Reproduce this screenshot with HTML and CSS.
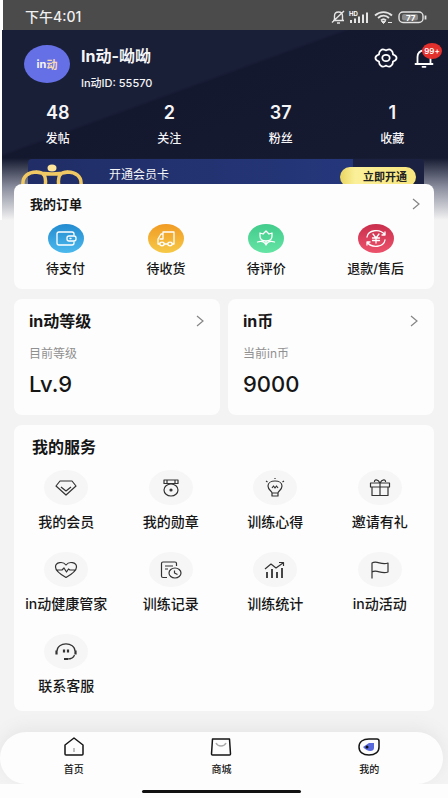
FILE: index.html
```html
<!DOCTYPE html>
<html lang="zh-CN">
<head>
<meta charset="utf-8">
<meta name="viewport" content="width=device-width, initial-scale=1">
<title>我的</title>
<link rel="stylesheet" href="styles.css">
</head>
<body>
<div class="status">
  <span class="status-time">下午4:01</span>
  <svg class="status-icons" width="98" height="16" viewBox="0 0 98 16" fill="none" stroke="#e4e4e4" stroke-width="1.4" aria-hidden="true">
    <path d="M3 11.5h11M4.500 11V7c0-2.500 1.500-4 4-4s4 1.500 4 4v4M7 14h3M2 13.500L14 2"/>
    <g fill="#e4e4e4" stroke="none"><rect x="20" y="11" width="2" height="3"/><rect x="24" y="9.500" width="2" height="4.500"/><rect x="28" y="7.500" width="2" height="6.500"/><rect x="32" y="5.500" width="2" height="8.500"/><rect x="36" y="3.500" width="2" height="10.500"/></g>
    <text class="hd" x="19" y="7">HD</text>
    <path d="M45 6.500c5-4.500 12-4.500 17 0M48 9c3.500-3 8-3 11 0M51 11.500c1.500-1.500 3.500-1.500 5 0" stroke-width="1.800"/>
    <path d="M53.500 14.500l-2-2h4zM58 13.500h4" fill="#e4e4e4" stroke-width="1"/>
    <rect x="69" y="3" width="24" height="10.500" rx="4"/><rect x="72" y="5" width="16" height="6.500" rx="2" fill="#8a8a8a" stroke="none"/><path d="M95.500 6.500v4" stroke-width="1.800"/>
    <text class="battery" x="76" y="11.500">77</text>
  </svg>
</div>
<header class="hero">
  <div class="profile">
    <div class="avatar"><span>in</span><span class="avatar-accent">动</span></div>
    <div class="who">
      <h1>In动-呦呦</h1>
      <p>In动ID: 55570</p>
    </div>
    <button class="tool" type="button" aria-label="设置">
      <svg width="24" height="20" viewBox="0 0 24 20" fill="none" stroke="#fff" stroke-width="1.800" stroke-linejoin="round"><path d="M7 2.200C8.500 .500 10 1.500 12 2.300C14 1.500 15.500 .500 17 2.200C19 3.200 18.700 4.500 19 6.500C21 7.300 22.800 8 22.500 10C22.800 12 21 12.700 19 13.500C18.700 15.500 19 16.800 17 17.800C15.500 19.500 14 18.500 12 17.700C10 18.500 8.500 19.500 7 17.800C5 16.800 5.300 15.500 5 13.500C3 12.700 1.200 12 1.500 10C1.200 8 3 7.300 5 6.500C5.300 4.500 5 3.200 7 2.200Z"/><ellipse cx="12" cy="10" rx="3.700" ry="3.200"/></svg>
    </button>
    <button class="tool" type="button" aria-label="消息">
      <svg width="20" height="20" viewBox="0 0 20 20" fill="none" stroke="#fff" stroke-width="1.800" stroke-linecap="round" stroke-linejoin="round"><path d="M1.500 16h17M3.500 15.500V9c0-4 2.500-6.500 6.500-6.500s6.500 2.500 6.500 6.500v6.500M8.500 18.800h3"/></svg>
      <span class="badge">99+</span>
    </button>
  </div>
  <ul class="stats">
    <li><b>48</b><span>发帖</span></li>
    <li><b>2</b><span>关注</span></li>
    <li><b>37</b><span>粉丝</span></li>
    <li><b>1</b><span>收藏</span></li>
  </ul>
  <div class="member">
    <svg class="crown" width="62" height="26" viewBox="0 0 62 26" fill="none" stroke="#f0c964" stroke-width="3.500" aria-hidden="true"><path d="M2 22C1 13 8 9 15 9C23 9 26 13 24 24M60 22C61 13 54 9 47 9C39 9 36 13 38 24M15 9Q31 13 47 9"/><ellipse cx="31" cy="5" rx="4.500" ry="3.500" fill="#ffe49b" stroke="none"/></svg>
    <span>开通会员卡</span>
    <button class="open" type="button">立即开通</button>
  </div>
</header>
<main>
  <section class="card orders">
    <div class="row"><h2>我的订单</h2><svg class="more" viewBox="0 0 8 12"><path d="M1 1l6 5-6 5"/></svg></div>
    <nav class="order-list">
      <a href="#"><svg width="36" height="29" viewBox="0 0 36 29"><defs><linearGradient id="blue" x2="0" y2="1"><stop stop-color="#238bd0"/><stop offset="1" stop-color="#4cb9ed"/></linearGradient></defs><ellipse cx="18" cy="14.500" rx="18" ry="14.500" fill="url(#blue)"/><g class="glyph"><path d="M26 11V10q0-2-2-2H11q-2 0-2 2v9q0 2 2 2h13q2 0 2-2v-1"/><rect x="19" y="12" width="9" height="5" rx="2"/><path d="M22 14.500h1"/></g></svg>待支付</a>
      <a href="#"><svg width="36" height="29" viewBox="0 0 36 29"><defs><linearGradient id="gold" x2="0" y2="1"><stop stop-color="#f19b24"/><stop offset="1" stop-color="#f6c948"/></linearGradient></defs><ellipse cx="18" cy="14.500" rx="18" ry="14.500" fill="url(#gold)"/><g class="glyph"><path d="M12 20h-2v-5l3-5h2V8h11v12h-2M16 20h4M12 15h3v-5"/><ellipse cx="14" cy="20" rx="2.200" ry="1.800"/><ellipse cx="22" cy="20" rx="2.200" ry="1.800"/></g></svg>待收货</a>
      <a href="#"><svg width="36" height="29" viewBox="0 0 36 29"><defs><linearGradient id="green" x2="0" y2="1"><stop stop-color="#42cc8c"/><stop offset="1" stop-color="#65e4a5"/></linearGradient></defs><ellipse cx="18" cy="14.500" rx="18" ry="14.500" fill="url(#green)"/><g class="glyph"><path d="M12 9l3 1 3-3 3 3 3-1v3c0 3-2 5-6 5s-6-2-6-5zM18 17v4M9.500 18c4-1.500 7 0 8.500 3 1.500-3 4.500-4.500 8.500-3"/></g></svg>待评价</a>
      <a href="#"><svg width="36" height="29" viewBox="0 0 36 29"><defs><linearGradient id="red" x2="0" y2="1"><stop stop-color="#c92f4c"/><stop offset="1" stop-color="#ed526c"/></linearGradient></defs><ellipse cx="18" cy="14.500" rx="18" ry="14.500" fill="url(#red)"/><g class="glyph"><path d="M9 13c1-7 13-9 18-2M27 16c-1 7-13 9-18 2M27 8v3h-3M9 21v-3h3M15 10l3 4 3-4M14.500 14h7M14.500 16.500h7M18 14v5"/></g></svg>退款/售后</a>
    </nav>
  </section>
  <div class="pair">
    <section class="card level">
      <div class="row"><h2>in动等级</h2><svg class="more" viewBox="0 0 8 12"><path d="M1 1l6 5-6 5"/></svg></div>
      <p class="hint">目前等级</p><p class="value">Lv.9</p>
    </section>
    <section class="card level">
      <div class="row"><h2>in币</h2><svg class="more" viewBox="0 0 8 12"><path d="M1 1l6 5-6 5"/></svg></div>
      <p class="hint">当前in币</p><p class="value">9000</p>
    </section>
  </div>
  <section class="card services">
    <h2>我的服务</h2>
    <nav class="service-grid">
      <a href="#"><span class="disc"><svg width="24" height="20" viewBox="0 0 24 20"><path d="M6 3h12l4 5-10 9L2 8zM7 9l5 4 5-4"/></svg></span>我的会员</a>
      <a href="#"><span class="disc"><svg width="24" height="20" viewBox="0 0 24 20"><path d="M5 2h14v3.500H5zM8 2v4M16 2v4"/><ellipse cx="12" cy="12" rx="7" ry="6"/><circle cx="12" cy="12" r="1" fill="#333"/></svg></span>我的勋章</a>
      <a href="#"><span class="disc"><svg width="24" height="20" viewBox="0 0 24 20"><path d="M9 15c0-2-4-3-4-7 0-3 3-5 7-5s7 2 7 5c0 4-4 5-4 7zM9 15v3h6v-3M9 10l1.500-2L12 10l1.500-2 1.500 2M12 0v1M3 3l1.500 1M21 3l-1.500 1"/></svg></span>训练心得</a>
      <a href="#"><span class="disc"><svg width="24" height="20" viewBox="0 0 24 20"><path d="M2.500 5h19v4h-19zM4 9v8.500h16V9M12 5v12.500M12 5C10 1 6 1 6.500 4M12 5c2-4 6-4 5.500-1"/></svg></span>邀请有礼</a>
      <a href="#"><span class="disc"><svg width="24" height="20" viewBox="0 0 24 20"><path d="M12 17.500C5 13.500 1.500 10 1.500 7 1.500 2 9 1 12 5c3-4 10.500-3 10.500 2 0 3-3.500 6.500-10.500 10.500zM3 10h5l2-2 2.500 4 2-3 1.500 1h5"/></svg></span>in动健康管家</a>
      <a href="#"><span class="disc"><svg width="24" height="20" viewBox="0 0 24 20"><path d="M8 17.500H4q-1.500 0-1.500-1.500V3.500Q2.500 2 4 2h12q1.500 0 1.500 1.500V6M6 6h8M6 9h3"/><ellipse cx="16" cy="13" rx="6" ry="5"/><path d="M15.500 10.500V13l3 1.500"/></svg></span>训练记录</a>
      <a href="#"><span class="disc"><svg width="24" height="20" viewBox="0 0 24 20"><path d="M2 9l6-5 5 4 7-5M16 2.500h4.500V6"/><path d="M4 12v6M9 9v9M14 12v6M19 8v10" stroke-width="1.800"/></svg></span>训练统计</a>
      <a href="#"><span class="disc"><svg width="24" height="20" viewBox="0 0 24 20"><path d="M4 18.500V3c5-3 9 2.500 16 0v9c-7 2.500-11-3-16 0"/></svg></span>in动活动</a>
      <a href="#"><span class="disc"><svg width="24" height="20" viewBox="0 0 24 20"><path d="M3 9C3-.500 21-.500 21 9M20.500 13c-1 3-4 4-7 4"/><path d="M2.500 8.500v4M21.500 8.500v4M10 7.500v3M14 7.500v3M10 17h4" stroke-width="2.200"/></svg></span>联系客服</a>
    </nav>
  </section>
</main>
<footer>
  <nav class="tabs">
    <a href="#"><svg width="22" height="20" viewBox="0 0 22 20"><path d="M2 8l9-7 9 7v9q0 1-1 1H3q-1 0-1-1z"/><path d="M11 11v4" stroke="#aaa"/></svg>首页</a>
    <a href="#"><svg width="22" height="20" viewBox="0 0 22 20"><path d="M2.500 2h17l1 15q0 1-1 1h-17q-1 0-1-1z"/><path d="M6 6c2 4 8 4 10 0" stroke="#aaa"/></svg>商城</a>
    <a href="#" aria-current="page"><svg width="22" height="20" viewBox="0 0 22 20"><path d="M11 2h8q2 0 2 2v6c0 5-4 8-10 8S1 15 1 10s4-8 10-8z"/><path d="M5 10l6-4h5v5c0 4-7 4-11-1z" fill="#5769dd" stroke="none"/><circle cx="9" cy="10" r="1.500" fill="#111" stroke="none"/></svg>我的</a>
  </nav>
  <div class="home-bar"></div>
</footer>
</body>
</html>
```
FILE: styles.css
```css
* { box-sizing: border-box; }
body {
  margin: 0;
  min-height: 100vh;
  display: flex;
  flex-direction: column;
  background: #f3f3f3;
  color: #161616;
  font-family: Inter, "Noto Sans CJK SC", sans-serif;
}
h1, h2, p, ul { margin: 0; padding: 0; }
ul { list-style: none; }
a { color: inherit; text-decoration: none; }
button { border: 0; padding: 0; background: none; font: inherit; }
svg { display: block; flex: none; }

.status {
  height: 30px;
  margin-left: 3px;
  padding: 4px 20px 0 22px;
  display: flex;
  align-items: center;
  justify-content: space-between;
  background: #4b4b4b;
  color: #f0f0f0;
  box-shadow: -3px 0 #fff;
}
.status-time { font-size: 14px; line-height: 20px; font-weight: 500; }
.hd, .battery { fill: #fff; stroke: none; font-weight: 700; }
.hd { font-size: 6px; }
.battery { font-size: 8px; }

.hero {
  margin-left: 2px;
  height: 190px;
  margin-bottom: -36px;
  padding-top: 14px;
  background:
    linear-gradient(180deg, transparent 128px, #8d90a0 158px, #f3f3f3 190px),
    linear-gradient(160deg, #1a1f38 0%, #1a1f38 35%, #14182f 36%, #171c33 100%);
  color: #f5f5f7;
  box-shadow: -2px 0 #fff;
}
.profile { display: flex; align-items: flex-start; padding: 0 14px 0 22px; }
.avatar {
  width: 46px;
  height: 38px;
  margin-top: 1px;
  border-radius: 50%;
  background: #6570e6;
  display: flex;
  align-items: center;
  justify-content: center;
  font-size: 11px;
  font-weight: 700;
}
.avatar-accent { color: #f6d9b4; }
.who { flex: 1; margin-left: 11px; }
.who h1 { font-size: 16px; line-height: 24px; font-weight: 700; }
.who p { margin-top: 5px; font-size: 11px; line-height: 20px; font-weight: 500; }
.tool { position: relative; color: #fff; margin: 4px 0 0 16px; }
.badge {
  position: absolute;
  left: 8px;
  top: -5px;
  width: 20px;
  height: 16px;
  border-radius: 50%;
  background: #e3302c;
  font-size: 8px;
  line-height: 16px;
  font-weight: 600;
}
.stats { display: grid; grid-template-columns: repeat(4, 1fr); margin-top: 8px; text-align: center; }
.stats b { display: block; font-size: 18px; line-height: 24px; font-weight: 600; }
.stats span { display: block; margin-top: 5px; font-size: 12px; line-height: 18px; font-weight: 500; }
.member {
  position: relative;
  height: 36px;
  margin: 11px 24px 0 26px;
  padding: 0 8px 0 81px;
  display: flex;
  align-items: flex-start;
  justify-content: space-between;
  border-radius: 4px 4px 0 0;
  background: linear-gradient(90deg, #202d66, #25377b 82%, #1b2140 82%);
  font-size: 12px;
  line-height: 32px;
}
.crown { position: absolute; left: -7px; top: 4px; }
.open {
  width: 76px;
  height: 20px;
  margin-top: 8px;
  padding-left: 14px;
  border-radius: 10px;
  background: linear-gradient(90deg, #e9d65f, #fbf09a 20%, #f8e67d);
  color: #222;
  font-size: 11px;
  line-height: 20px;
  font-weight: 700;
}

main {
  position: relative;
  display: flex;
  flex-direction: column;
  gap: 10px;
  padding: 0 14px;
}
.card { background: #fdfdfd; border-radius: 8px; }
.row { display: flex; align-items: center; justify-content: space-between; }
.more { width: 8px; height: 12px; fill: none; stroke: #858585; stroke-width: 1.2; }
.orders { padding: 10px 14px 11px 16px; }
.orders h2 { font-size: 13px; line-height: 20px; font-weight: 700; }
.order-list { display: flex; justify-content: space-between; margin-top: 10px; padding: 0 16px; }
.order-list a { display: flex; flex-direction: column; align-items: center; gap: 5px; font-size: 13px; line-height: 20px; font-weight: 500; }
.glyph { fill: none; stroke: #fff; stroke-width: 1.3; stroke-linecap: round; stroke-linejoin: round; }
.pair { display: grid; grid-template-columns: 1fr 1fr; gap: 8px; }
.level { padding: 10px 16px 17px 15px; }
.level h2 { font-size: 16px; line-height: 24px; font-weight: 700; }
.hint { margin-top: 12px; font-size: 12px; line-height: 18px; color: #909090; }
.value { margin-top: 7px; font-size: 22px; line-height: 28px; font-weight: 500; }
.services { padding: 10px 0 15px; }
.services h2 { padding-left: 18px; font-size: 16px; line-height: 24px; font-weight: 700; }
.service-grid { display: grid; grid-template-columns: repeat(4, 1fr); row-gap: 20px; margin: 11px 2px 0 0; }
.service-grid a { display: flex; flex-direction: column; align-items: center; gap: 7px; font-size: 14px; line-height: 20px; font-weight: 500; white-space: nowrap; }
.disc { width: 44px; height: 35px; border-radius: 50%; background: #f6f6f6; display: flex; align-items: center; justify-content: center; }
.disc svg { fill: none; stroke: #333; stroke-width: 1.2; stroke-linejoin: round; }

footer { margin-top: auto; }
.tabs {
  height: 52px;
  margin-right: 5px;
  padding-top: 5px;
  display: grid;
  grid-template-columns: repeat(3, 1fr);
  border-radius: 26px;
  background: #fdfdfd;
  box-shadow: 0 -4px 16px #e6e6e6;
}
.tabs a { display: flex; flex-direction: column; align-items: center; gap: 4px; font-size: 10px; line-height: 16px; font-weight: 500; }
.tabs svg { fill: none; stroke: #151515; stroke-width: 1.5; stroke-linejoin: round; }
.home-bar { position: relative; height: 14px; padding-right: 5px; display: flex; justify-content: center; align-items: center; background: #fdfdfd; }
.home-bar::before { content: ""; width: 36%; height: 3px; border-radius: 2px; background: #111; }
```
